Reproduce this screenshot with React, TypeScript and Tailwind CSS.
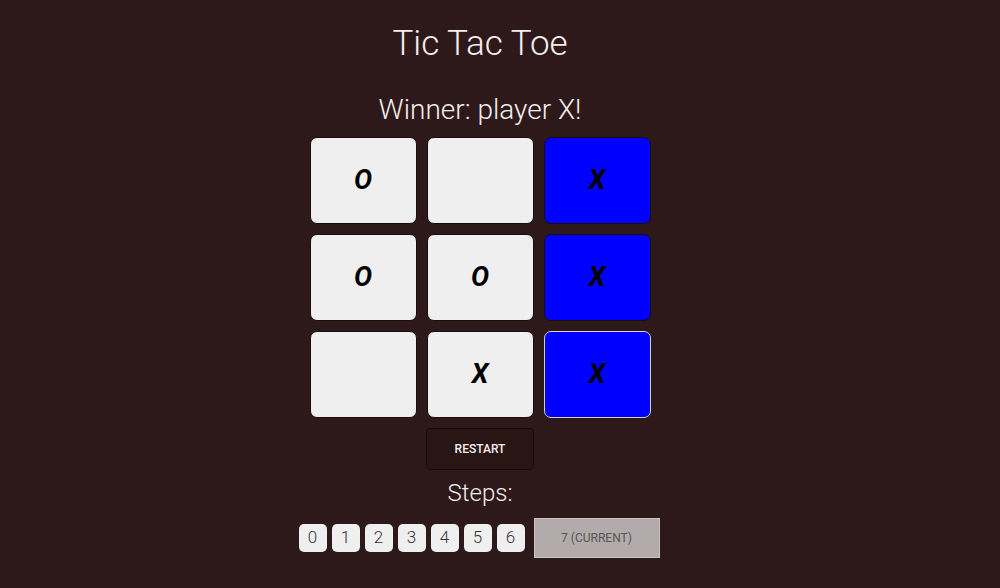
import { useState } from "react";

type Cell = "X" | "O" | null;

const board: Cell[] = ["O", null, "X", "O", "O", "X", null, "X", "X"];
const winLine = [2, 5, 8];

export default function App() {
  const [cells] = useState<Cell[]>(board);
  const steps = [0, 1, 2, 3, 4, 5, 6];

  return (
    <div className="min-h-[588px] w-full bg-[#2d1919] flex flex-col items-center pr-[40px] font-['Roboto',sans-serif] text-[#f5eeee]">
      <h1 className="mt-[23px] text-[35px] leading-[42px] font-light">Tic Tac Toe</h1>
      <div className="mt-[28px] text-[28px] leading-[34px] font-light">Winner: player X!</div>
      <div className="mt-[10px] grid grid-cols-[107px_107px_107px] gap-x-[10px] gap-y-[10px]">
        {cells.map((c, i) => {
          const win = winLine.includes(i);
          return (
            <button
              key={i}
              className={
                "h-[87px] rounded-[7px] flex items-center justify-center text-[27px] font-bold italic text-black font-['Roboto',sans-serif] " +
                (win
                  ? "bg-[#0000ff] " + (i === 8 ? "border border-[#d8d0d0]" : "border border-[#1a0c0c]")
                  : "bg-[#efefef] border border-[#1a0c0c]")
              }
            >
              {c}
            </button>
          );
        })}
      </div>
      <button className="mt-[10px] w-[108px] h-[42px] rounded-[4px] bg-[#2a1515] border border-[#180a0a] text-[12px] font-medium text-[#f5eeee]">
        RESTART
      </button>
      <div className="mt-[9px] text-[24px] leading-[28px] font-light">Steps:</div>
      <div className="mt-[11px] ml-[-2px] flex items-center gap-[5px]">
        {steps.map((s) => (
          <button
            key={s}
            className="w-[28px] h-[28px] rounded-[5px] bg-[#efefef] text-[#333] text-[17px] font-light flex items-center justify-center"
          >
            {s}
          </button>
        ))}
        <button className="ml-[4px] w-[126px] h-[40px] bg-[#b3abab] border border-[#c9c2c2] text-[12px] text-[#555] font-normal">
          7 (CURRENT)
        </button>
      </div>
    </div>
  );
}
